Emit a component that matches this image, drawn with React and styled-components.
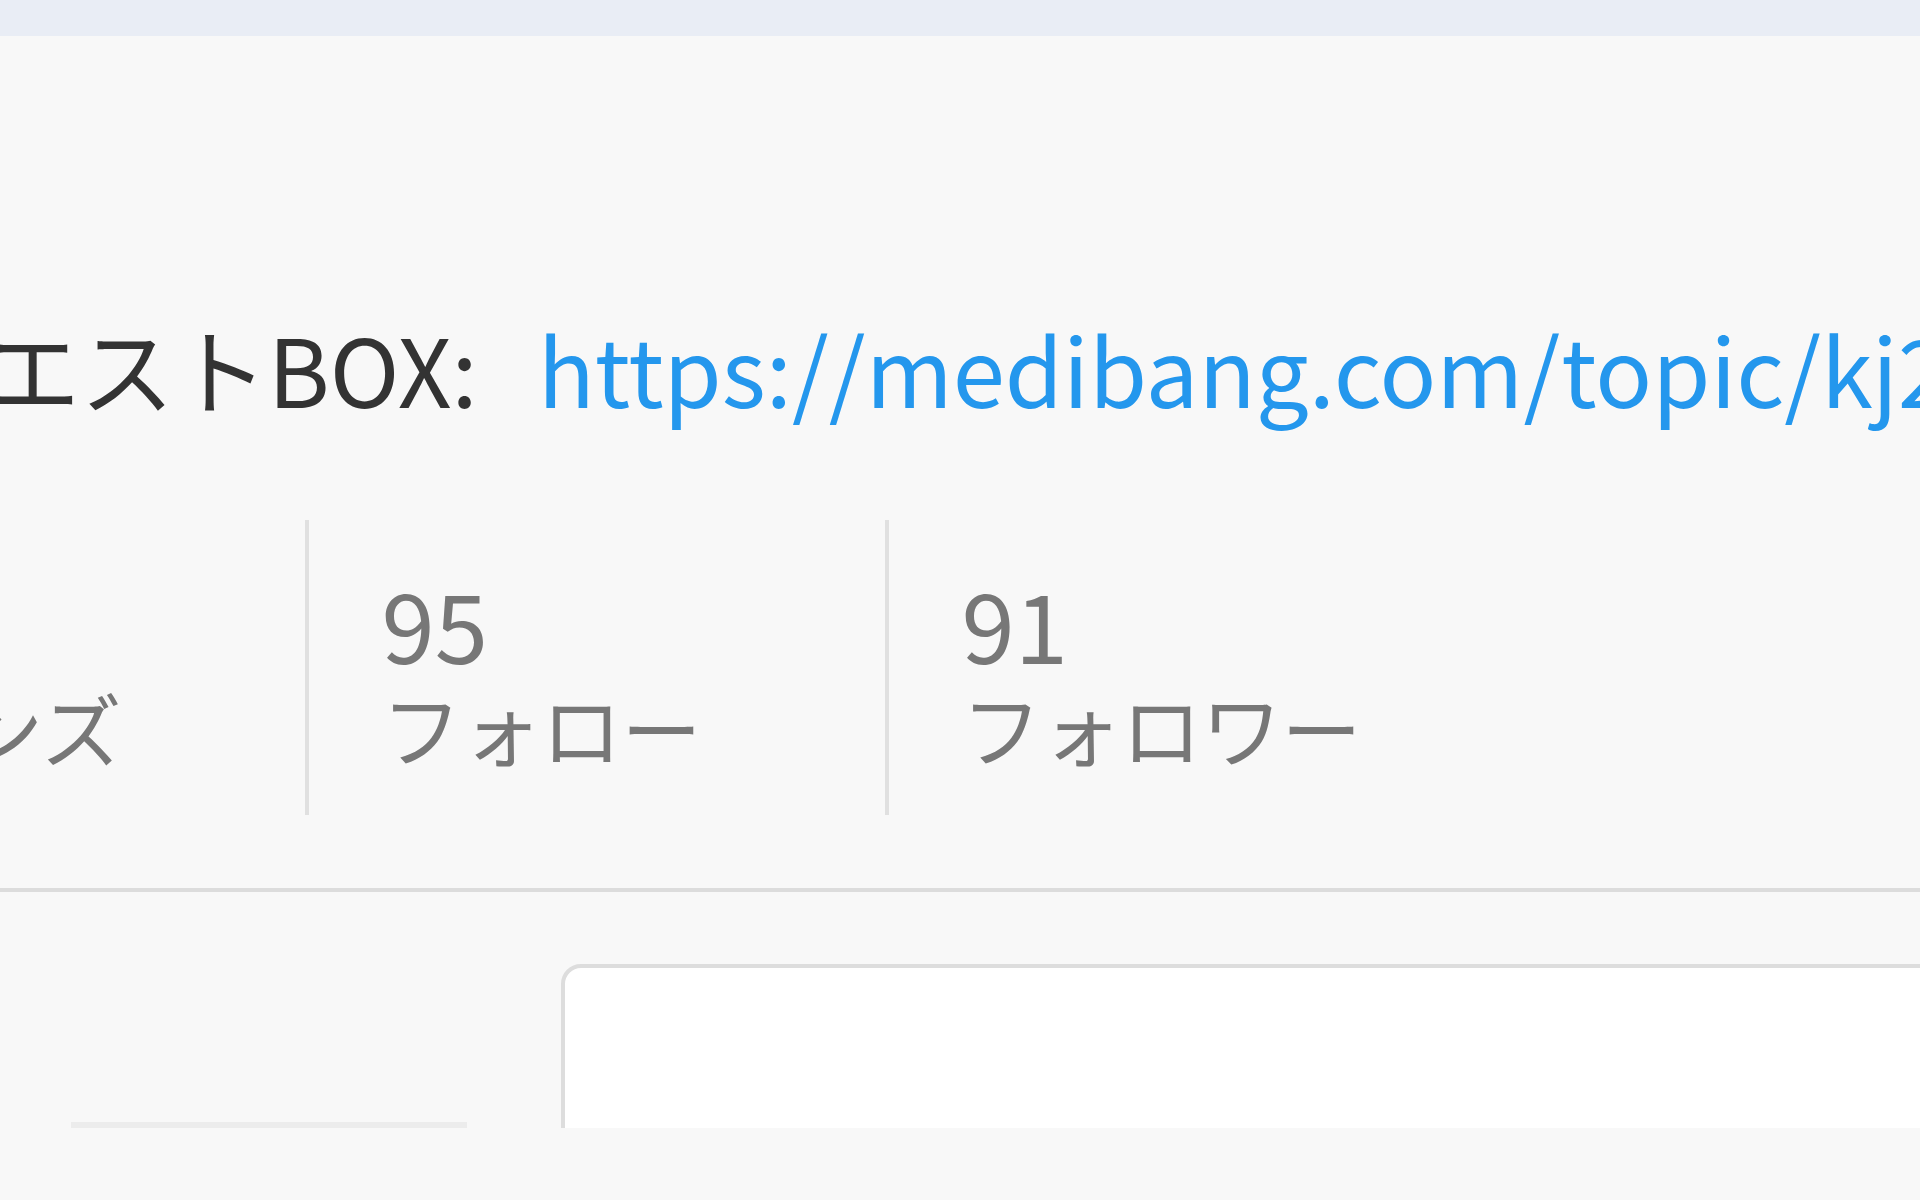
import React from 'react';
import styled, { createGlobalStyle } from 'styled-components';

const Global = createGlobalStyle`
  html, body { margin: 0; padding: 0; background: #f8f8f8; }
  body { font-family: "Noto Sans CJK JP", "Noto Sans", sans-serif; overflow: hidden; }
`;

const Page = styled.div`
  width: 1920px;
  height: 1200px;
  overflow: hidden;
  background: #f8f8f8;
  display: flex;
  flex-direction: column;
`;

const TopBar = styled.div`
  flex: 0 0 36px;
  background: #e9edf5;
`;

const Profile = styled.section`
  margin-left: -200px;
  margin-right: -200px;
  padding-top: 259px;
  padding-bottom: 73px;
  border-bottom: 4px solid #dcdcdc;
`;

const InfoLine = styled.div`
  display: flex;
  align-items: baseline;
  white-space: nowrap;
  font-size: 94px;
  line-height: 144px;
  color: #333;
  margin-left: -2px;
`;

const InfoLink = styled.a`
  color: #2497ed;
  text-decoration: none;
  margin-left: 60px;
`;

const Stats = styled.div`
  display: flex;
  margin-top: 81px;
  margin-left: 3px;
`;

const Stat = styled.div`
  padding: 48px 184px 41px 72px;
  border-left: 4px solid #e0e0e0;
  color: #777;
  white-space: nowrap;
  &:first-child {
    padding-left: 0;
    border-left: none;
  }
`;

const StatNum = styled.div`
  font-size: 96px;
  line-height: 110px;
`;

const StatLabel = styled.div`
  font-size: 80px;
  line-height: 96px;
`;

const Lower = styled.section`
  flex: 0 0 236px;
  overflow: hidden;
  display: flex;
  align-items: flex-start;
  padding-left: 71px;
`;

const SideTab = styled.div`
  flex: 0 0 396px;
  height: 230px;
  border-bottom: 6px solid #ececec;
`;

const Card = styled.div`
  flex: 0 0 1600px;
  margin-left: 94px;
  margin-top: 72px;
  height: 400px;
  background: #fff;
  border: 4px solid #dddddd;
  border-radius: 20px;
`;

const stats = [
  { num: '12', label: 'フレンズ' },
  { num: '95', label: 'フォロー' },
  { num: '91', label: 'フォロワー' },
];

export default function App() {
  return (
    <Page>
      <Global />
      <TopBar />
      <Profile>
        <InfoLine>
          <span>リクエストBOX:</span>
          <InfoLink href="#">https://medibang.com/topic/kj2x8d7q</InfoLink>
        </InfoLine>
        <Stats>
          {stats.map((s) => (
            <Stat key={s.label}>
              <StatNum>{s.num}</StatNum>
              <StatLabel>{s.label}</StatLabel>
            </Stat>
          ))}
        </Stats>
      </Profile>
      <Lower>
        <SideTab />
        <Card />
      </Lower>
    </Page>
  );
}
